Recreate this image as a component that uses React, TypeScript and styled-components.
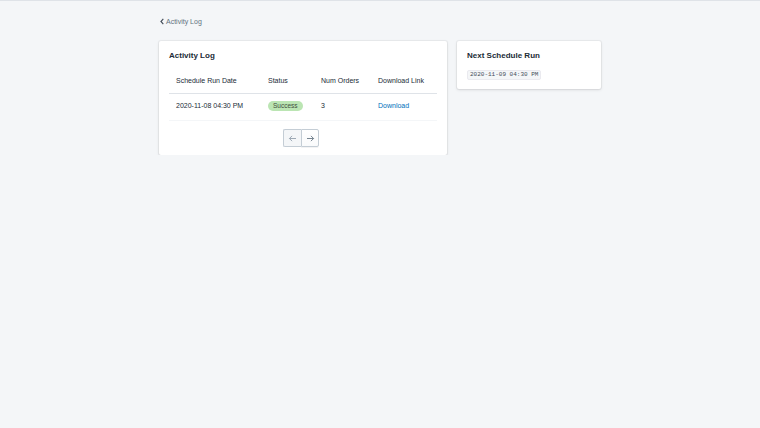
import React from "react";
import styled, {createGlobalStyle} from "styled-components";

const GlobalStyle = createGlobalStyle`
  html, body {
    margin: 0;
    padding: 0;
    background: #f4f6f8;
    font-family: "Liberation Sans", Arial, sans-serif;
    color: #212b36;
  }
`;

const rows = [
  {date: "2020-11-08 04:30 PM", status: "Success", orders: 3, link: "Download"},
];

const App: React.FC = () => {
  return (
    <>
      <GlobalStyle />
      <TopBar />
      <Page>
        <Breadcrumb>
          <svg width="6" height="7" viewBox="0 0 6 8">
            <path d="M4.5 1 L1.8 4 L4.5 7" fill="none" stroke="#454f5b" strokeWidth="1.3" />
          </svg>
          Activity Log
        </Breadcrumb>

        <Layout>
          <Card grow>
            <CardTitle>Activity Log</CardTitle>
            <Table>
              <colgroup>
                <col style={{width: 92}} />
                <col style={{width: 53}} />
                <col style={{width: 57}} />
                <col />
              </colgroup>
              <thead>
                <tr>
                  <Th>Schedule Run Date</Th>
                  <Th>Status</Th>
                  <Th>Num Orders</Th>
                  <Th>Download Link</Th>
                </tr>
              </thead>
              <tbody>
                {rows.map((row) => (
                  <tr key={row.date}>
                    <Td>{row.date}</Td>
                    <Td>
                      <Badge>{row.status}</Badge>
                    </Td>
                    <Td>{row.orders}</Td>
                    <Td>
                      <Link href="#">{row.link}</Link>
                    </Td>
                  </tr>
                ))}
              </tbody>
            </Table>

            <Pagination>
              <PageButton disabled>
                <svg width="9" height="7" viewBox="0 0 10 8">
                  <path d="M9 4 H1.5 M4.5 1 L1.5 4 L4.5 7" fill="none" stroke="#919eab" strokeWidth="1" />
                </svg>
              </PageButton>
              <PageButton>
                <svg width="9" height="7" viewBox="0 0 10 8">
                  <path d="M1 4 H8.5 M5.5 1 L8.5 4 L5.5 7" fill="none" stroke="#637381" strokeWidth="1" />
                </svg>
              </PageButton>
            </Pagination>
          </Card>

          <Card width={144}>
            <CardTitle>Next Schedule Run</CardTitle>
            <Code>2020-11-09 04:30 PM</Code>
          </Card>
        </Layout>
      </Page>
    </>
  );
};

export default App;

const TopBar = styled.div`
  height: 1px;
  background: #dfe3e8;
`;

const Page = styled.div`
  width: 442px;
  margin: 0 auto;
  padding-top: 15px;
`;

const Breadcrumb = styled.div`
  display: flex;
  align-items: center;
  gap: 1px;
  height: 11px;
  font-size: 7px;
  color: #637381;
  margin-bottom: 14px;

  svg {
    display: block;
  }
`;

const Layout = styled.div`
  display: flex;
  align-items: flex-start;
  gap: 10px;
`;

const Card = styled.div<{grow?: boolean; width?: number}>`
  background: #fff;
  border-radius: 2px;
  box-shadow: 0 0 0 1px rgba(63, 63, 68, 0.05),
    0 1px 3px 0 rgba(63, 63, 68, 0.15);
  padding: 10px 10px 8px;
  box-sizing: border-box;
  flex: ${({grow}) => (grow ? "1" : "none")};
  width: ${({width}) => (width ? `${width}px` : "auto")};
`;

const CardTitle = styled.h2`
  margin: 0;
  font-size: 8px;
  line-height: 10px;
  font-weight: 700;
  color: #212b36;
`;

const Table = styled.table`
  width: 100%;
  border-collapse: collapse;
  table-layout: fixed;
  margin-top: 8px;
  font-size: 7px;
`;

const Th = styled.th`
  text-align: left;
  font-weight: 400;
  padding: 7px 7px 8px;
  line-height: 9px;
  border-bottom: 1px solid #dfe3e8;
  white-space: nowrap;
`;

const Td = styled.td`
  padding: 6px 7px 9px;
  line-height: 11px;
  border-bottom: 1px solid #f4f6f8;
  white-space: nowrap;
  vertical-align: middle;
`;

const Badge = styled.span`
  display: inline-block;
  padding: 0 5px;
  border-radius: 10px;
  background: #bbe5b3;
  color: #414f3e;
  font-size: 6.5px;
  line-height: 10px;
`;

const Link = styled.a`
  color: #006fbb;
  text-decoration: none;
`;

const Pagination = styled.div`
  display: flex;
  justify-content: center;
  margin-top: 8px;
  padding-right: 4px;
`;

const PageButton = styled.button`
  display: flex;
  align-items: center;
  justify-content: center;
  width: 18px;
  height: 18px;
  padding: 0;
  border: 1px solid #c4cdd5;
  background: linear-gradient(to bottom, #fff, #f9fafb);
  box-shadow: 0 1px 0 0 rgba(22, 29, 37, 0.05);

  &:first-child {
    border-radius: 2px 0 0 2px;
    border-right-width: 0;
  }

  &:last-child {
    border-radius: 0 2px 2px 0;
  }

  &:disabled {
    background: #f4f6f8;
    box-shadow: none;
  }
`;

const Code = styled.code`
  display: block;
  width: fit-content;
  box-sizing: border-box;
  height: 10px;
  margin: 9px 0 1px;
  padding: 0 2px;
  font-family: "Liberation Mono", "DejaVu Sans Mono", monospace;
  font-size: 6px;
  line-height: 8px;
  color: #454f5b;
  background: #f4f6f8;
  border: 1px solid #eaeaef;
  border-radius: 2px;
`;
